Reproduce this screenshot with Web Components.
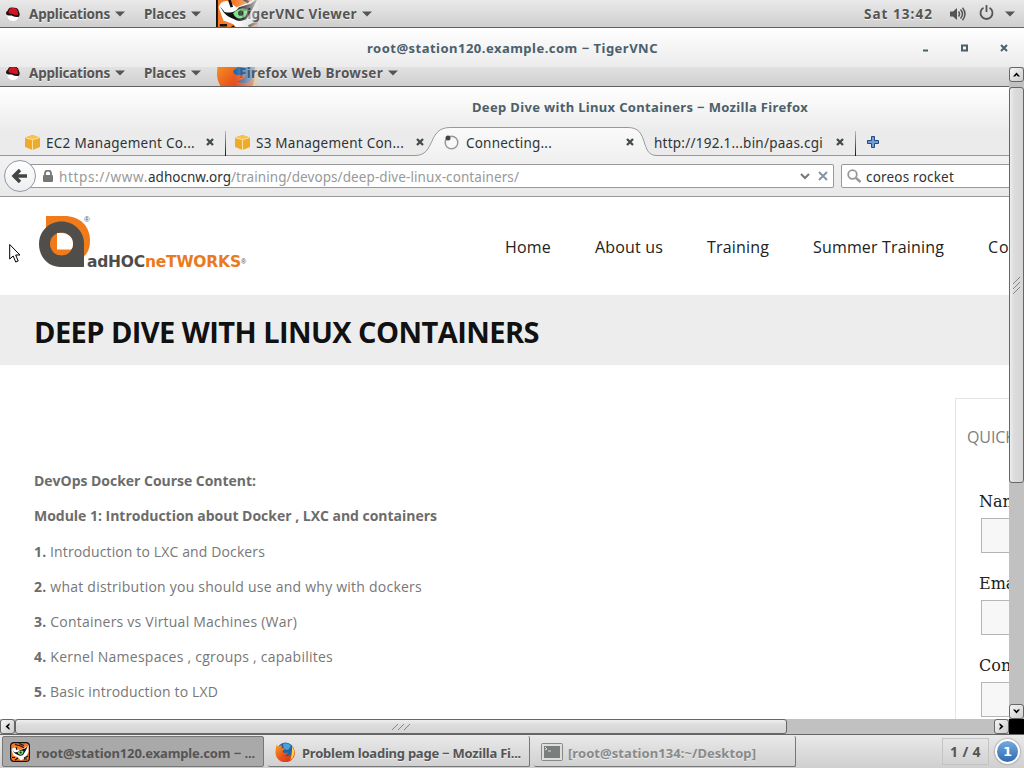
<!DOCTYPE html>
<html lang="en"><head><meta charset="utf-8"><title>Remote desktop</title>
<style>html,body{margin:0;width:1024px;height:768px;overflow:hidden;background:#fff;font-family:"Noto Sans","Open Sans",sans-serif}</style></head>
<body><remote-desktop></remote-desktop>
<script>
function define(name, css, html, after){
  customElements.define(name, class extends HTMLElement{
    connectedCallback(){
      if(this.shadowRoot) return;
      const t=document.createElement('template');
      t.innerHTML='<style>*{box-sizing:border-box}svg{display:block;flex:none}'+css+'</style>'+html;
      this.attachShadow({mode:'open'}).append(t.content.cloneNode(true));
      if(after) after(this,this.shadowRoot);
    }
  });
}
/* Text run spaced out to a given width */
define('fit-text',':host{display:block;flex:none;white-space:pre;line-height:20px}span{display:inline-block}','<span><slot></slot></span>',(h,r)=>{
  const w=+h.getAttribute('w'), s=r.querySelector('span');
  h.style.width=w+'px';
  const n=[...h.textContent].length;
  const have=s.getBoundingClientRect().width;
  s.style.letterSpacing=((w-have)/n)+'px';
  s.style.marginRight='-20px';
});
define('down-arrow',':host{display:block;flex:none}','<svg width="10" height="6"><path d="M0 .5h10L5 5.5z" fill="#555"/></svg>');
define('hat-icon',':host{display:block;flex:none}','<svg width="14" height="14" viewBox="0 0 14 14"><ellipse cx="7" cy="9.500" rx="5.500" ry="4.500" fill="#fff"/><path d="M0 6.500q0-2.500 1.500-2.500Q3 0 6 .6l4.500.4q2 1 2.500 4 1.500 3-.5 5-3 .5-7-1.500Q.5 9 0 6.500z" fill="#1c1010"/><path d="M2.500 6Q2.500 1 5.500 1.300q2-.8 5 .4Q12 3.500 12.300 7.500q-3 1.500-6-.5Q4 7 2.500 6z" fill="#d01523"/></svg>');
define('tiger-icon',':host{display:block;flex:none}svg{width:100%;height:100%}','<svg viewBox="0 0 20 20"><rect x=".6" y=".6" width="18.800" height="18.800" rx="3.500" fill="#f47a2a" stroke="#111" stroke-width="1.200"/><path d="M1.500 8q1-3 4-2.500L9 8l5-2 4.500-2.500V10l-3 5.500-4.500 3-3.500-3.500-4-1.500z" fill="#fff"/><path d="M5 2.500l6 1.500 3 2M9 1.500l5 2M2 15.500h3M5 18l3-2M18 14l-4 2M17 17l-3 0M6 5l1 3" stroke="#111" stroke-width="1.100" fill="none"/><path d="M2 7.500L4 10q4 1 6-2l5-1.500L18 4l-2.500 5L13 13q-3 1.500-5 0-3-1-4.500-3z" fill="#111"/><path d="M7.500 10.500q3-3 6-1.500 0 3.500-3 3.700-2 0-3-2.200z" fill="#7ce087"/><circle cx="10.700" cy="10.500" r="1.100" fill="#183018"/></svg>');
define('fox-icon',':host{display:block;flex:none}svg{width:100%;height:100%}','<svg viewBox="0 0 20 20"><defs><linearGradient id="a" x1="0" y1="0" x2="1" y2="1"><stop offset="0" stop-color="#f7a823"/><stop offset=".5" stop-color="#e8541c"/><stop offset="1" stop-color="#cf2f10"/></linearGradient></defs><circle cx="10.500" cy="9" r="8.600" fill="#2364a5"/><path d="M8 2q5-2 8 2l-3 4-4-1z" fill="#4aa2dc"/><path d="M2 2q0 2 1 2.500Q5 3 7 3.500L6.500 6q3 0 3.500 1L7.500 9q0 2 2.500 2l3-.5q-1 3-4 3 4 2 7-1 2-3 1-8 3 3 3 7a9.700 9.700 0 0 1-19.500-2Q.5 5 2 2z" fill="url(#a)"/><path d="M17 4q3 4 2.300 8-1 4-4 6 2-5 1.700-14z" fill="#ffd33d"/></svg>');
/* Desktop top panel */
define('top-panel',':host{display:flex;align-items:center;height:28px;flex:none;background:linear-gradient(#e9e9e9,#cfcfcf);border-bottom:1px solid #606060;color:#555;font-weight:700;font-size:13.500px;text-shadow:0 1px #f2f2f2}hat-icon{margin-left:6px}.pic{width:42px;height:27px;margin-left:15px;overflow:hidden;-webkit-mask:linear-gradient(90deg,#000 45%,rgba(0,0,0,.15))}.pic *{width:48px;height:48px;margin:-12px 0 0 -1px}.pic fox-icon{margin:-9px 0 0 0;width:46px;height:46px}fit-text.n{margin-left:-19px;text-shadow:0 0 1px #eee,0 1px #eee}down-arrow{margin-left:5px}',
 '<hat-icon></hat-icon><fit-text w="81" style="margin-left:9px">Applications</fit-text><down-arrow></down-arrow><fit-text w="42" style="margin-left:19px">Places</fit-text><down-arrow></down-arrow><div class="pic"></div><fit-text class="n"></fit-text><down-arrow></down-arrow><slot></slot>',(h,r)=>{
 r.querySelector('.pic').append(document.createElement(h.getAttribute('icon')));
 const o=r.querySelector('.n'),n=document.createElement('fit-text');n.className='n';n.setAttribute('w',h.getAttribute('w'));n.textContent=h.getAttribute('app');o.replaceWith(n);
});
define('status-area',':host{display:flex;align-items:center;flex:none;margin-left:auto}','<fit-text w="69">Sat 13:42</fit-text><svg width="17" height="14" style="margin-left:17px" fill="none" stroke="#555"><path d="M0 4.500h3l4-3.500v12L3 9.500H0z" fill="#555" stroke="none"/><path d="M8.500 4.500q2 2.500 0 5M10.500 2.500q4 4.500 0 9M12.500.8q5 6.200 0 12.400" stroke-width="1.500"/></svg><svg width="15" height="15" style="margin:-2px 0 0 12px" fill="none" stroke="#555" stroke-width="1.800"><path d="M4.500 2.800a6 6 0 1 0 6 0M7.500 0v7"/></svg><down-arrow style="margin:0 9px 0 11px"></down-arrow>');
define('vnc-title',':host{display:flex;align-items:center;height:39px;flex:none;background:linear-gradient(#fff,#ebebeb);color:#4a606b;font-weight:700;font-size:13px;padding-left:367px}svg{margin-left:265px}',
 '<fit-text w="291">root@station120.example.com − TigerVNC</fit-text><svg width="90" height="12" fill="none" stroke="#4a606b"><path d="M0 8.500h5" stroke-width="2"/><rect x="39" y="3.500" width="5" height="5" stroke-width="2"/><path d="M78 3l6 6M84 3l-6 6" stroke-width="2"/></svg>');
define('browser-title',':host{display:block;height:40px;flex:none;padding:10px 0 0 472px;color:#4a606b;font-weight:700;font-size:13px}','<fit-text w="336">Deep Dive with Linux Containers − Mozilla Firefox</fit-text>');
define('tab-icon',':host{display:block;flex:none}','<svg width="15" height="15" viewBox="0 0 15 15"><path d="M0 2.500L7.500 0 15 2.500V12l-7.500 3L0 12z" fill="#f0aa2a"/><path d="M0 2.500L7.500 4.500 15 2.500 7.500 0z" fill="#f7c34c"/><path d="M.5 2.700l7 2 7-2M7.500 4.500V15" fill="none" stroke="#fce3a4"/></svg>');
define('browser-tab',':host{display:flex;align-items:center;width:210px;height:30px;flex:none;position:relative;color:#2e3436;font-size:13.500px;padding-top:2px}::slotted(*){position:relative}.x{margin-left:auto;margin-right:11px;margin-top:-2px;position:relative}.bg{position:absolute;left:-20px;top:0;display:none}:host([on]) .bg{display:block}:host([sep]):after{content:"";position:absolute;right:-1px;top:4px;width:1px;height:25px;background:linear-gradient(#bbb,#111)}',
 '<svg class="bg" width="242" height="31"><defs><linearGradient id="g" x2="0" y2="1"><stop offset="0" stop-color="#fafafa"/><stop offset="1" stop-color="#f1f1f1"/></linearGradient></defs><path d="M0 31V28.500C21 28.500 12 .5 35 .5H213C235 .5 224 28.500 242 28.500V31z" fill="url(#g)"/><path d="M0 28.500C21 28.500 12 .5 35 .5H213C235 .5 224 28.500 242 28.500" fill="none" stroke="#999"/></svg><slot></slot><svg class="x" width="8" height="8"><path d="M1 1l6 6M7 1L1 7" stroke="#424a4d" stroke-width="2.300"/></svg>');
define('tab-strip',':host{display:flex;height:30px;flex:none;padding-left:15px;background:linear-gradient(transparent 28px,#999 28px,#999 29px,#f1f1f1 29px);}tab-icon,.sp{margin-left:9.500px;margin-top:-2px}fit-text{margin-left:6.500px}.plus{margin:9px 0 0 12px}',
 `<browser-tab sep><tab-icon></tab-icon><fit-text w="149">EC2 Management Co...</fit-text></browser-tab><browser-tab><tab-icon></tab-icon><fit-text w="148">S3 Management Con...</fit-text></browser-tab><browser-tab on><svg class="sp" style="margin-left:9px" width="15" height="15"><circle cx="7.500" cy="7.500" r="6.300" fill="#f8f8f8" stroke="#999" stroke-width="1.500"/><circle cx="4" cy="3" r="2.500" fill="#444"/></svg><fit-text w="86" style="margin-left:7px">Connecting...</fit-text></browser-tab><browser-tab sep><fit-text w="169" style="margin-left:9px">http://192.1...bin/paas.cgi</fit-text></browser-tab><svg class="plus" width="12" height="12"><path d="M4.500.5h3v4h4v3h-4v4h-3v-4h-4v-3h4z" fill="#729fcf" stroke="#204a87"/></svg>`);
define('nav-bar',':host{display:flex;height:40px;flex:none;padding-top:7px;background:linear-gradient(#f1f1f1,#e9e9e9);border-bottom:1px solid #999;font-size:13.500px;color:#999;position:relative}.url,.s{display:flex;align-items:center;height:24px;background:#fff;border:1px solid #999;border-radius:2px;flex:none}fit-text{margin-top:2px}.url{width:813px;margin-left:-16px;padding-left:22px;border-left:0}.s{width:180px;margin-left:7px;padding-left:5px;color:#2e3436}.back{margin:-5px 0 0 3px;position:relative;z-index:1}b{font-weight:400;color:#2e3436}',
 `<svg class="back" width="34" height="34"><defs><linearGradient id="b" x2="0" y2="1"><stop stop-color="#fff"/><stop offset="1" stop-color="#eee"/></linearGradient></defs><circle cx="17" cy="17" r="15.500" fill="url(#b)" stroke="#8d98a5"/><path d="M24 17H12M17 11l-6 6 6 6" fill="none" stroke="#424545" stroke-width="3.500"/></svg><div class="url"><svg width="10" height="12"><path d="M2 6V3.500a3 3 0 0 1 6 0V6" fill="none" stroke="#777" stroke-width="1.800"/><rect y="5" width="10" height="7" rx="1" fill="#777"/></svg><fit-text w="89" style="margin-left:6px">https://www.</fit-text><fit-text w="83"><b>adhocnw.org</b></fit-text><fit-text w="288">/training/devops/deep-dive-linux-containers/</fit-text><svg width="30" height="12" style="margin-left:281px" fill="none" stroke-width="2"><path d="M1 4l4 4 4-4" stroke="#777"/><path d="M19 2l8 8M27 2l-8 8" stroke="#8595a6"/></svg></div><div class="s"><svg width="14" height="14" fill="none" stroke="#999"><circle cx="5.500" cy="5.500" r="4.300" stroke-width="1.800"/><path d="M9 9l4.500 4" stroke-width="2.500"/></svg><fit-text w="88" style="margin-left:5px">coreos rocket</fit-text></div>`);
define('site-header',':host{display:flex;height:98px;flex:none;background:#fff;font:16px "Open Sans",sans-serif;color:#222}.logo{display:flex;flex:none;width:209px;margin:19px 0 0 39px;align-items:flex-start}.w{margin:35px 0 0 -3px;display:flex;font:700 15.500px "DejaVu Sans",sans-serif;color:#4f4d4b}.w fit-text{line-height:22px}.o{color:#ea7a1d}.tm{font:7px/22px "Liberation Sans"}nav{display:flex;margin:40px 0 0 257px}nav *{margin-right:44px}',
 `<div class="logo"><svg width="52" height="51"><path d="M7 0h18c16 0 26 10 26 25 0 12-7 18-12 18H7z" fill="#ef7b1a"/><path d="M45 51H22C9 51 0 41 0 28S10 5.500 22.500 5.500 45 15 45 28z" fill="#4f4e4a"/><circle cx="22.500" cy="28" r="11.500" fill="#ef7b1a"/><path d="M18 17h4.500C29 17 34 21 34 28c0 3-1 5-2 5.500H18z" fill="#fff"/></svg><span style="font:8px/8px 'Liberation Sans';margin-left:-7px;color:#555">®</span><div class="w" style="margin-left:-3px"><fit-text w="58">adHOC</fit-text><fit-text class="o" w="96">neTWORKS</fit-text><span class="tm">®</span></div></div><nav><fit-text w="46">Home</fit-text><fit-text w="68">About us</fit-text><fit-text w="62">Training</fit-text><fit-text w="131">Summer Training</fit-text><fit-text w="64">Contact</fit-text></nav>`);
define('course-body',':host{display:block;width:600px;padding:106.300px 0 0 34px;font:14px "Open Sans",sans-serif;color:#777}fit-text{margin-bottom:15.150px}b{color:#6c6c6c}',
 '<fit-text w="222"><b>DevOps Docker Course Content:</b></fit-text><fit-text w="403"><b>Module 1: Introduction about Docker , LXC and containers</b></fit-text><fit-text w="231"><b>1.</b> Introduction to LXC and Dockers</fit-text><fit-text w="388"><b>2.</b> what distribution you should use and why with dockers</fit-text><fit-text w="263"><b>3.</b> Containers vs Virtual Machines (War)</fit-text><fit-text w="299"><b>4.</b> Kernel Namespaces , cgroups , capabilites</fit-text><fit-text w="184"><b>5.</b> Basic introduction to LXD</fit-text>');
define('quick-form',':host{display:block;width:220px;height:400px;flex:none;margin-top:33px;border:1px solid #e5e5e5;padding:28px 0 0 11px;font:16px "Open Sans",sans-serif;color:#808080}label{display:block;margin-left:12px;font:300 16px/22px "DejaVu Serif",serif;color:#222;height:82px}i{display:block;width:180px;height:35px;margin:5px 0 0 2px;background:#f7f7f7;border:1px solid #b5b5b5}.f{margin-top:44px}',
 '<fit-text w="124">QUICK CONTACT</fit-text><div class="f"><label>Name<i></i></label><label>Email<i></i></label><label>Contact<i></i></label></div>');
define('web-page',':host{display:flex;flex-direction:column;flex:1;background:#fff;overflow:hidden}h1{margin:0;height:70px;flex:none;background:#ededed;padding:27px 0 0 34px;font:700 29px "Open Sans",sans-serif;color:#111}.row{display:flex;justify-content:space-between;width:1175px}',
 '<site-header></site-header><h1><fit-text w="505">DEEP DIVE WITH LINUX CONTAINERS</fit-text></h1><div class="row"><course-body></course-body><quick-form></quick-form></div>');
define('scroll-button',':host{display:flex;flex:none;width:15px;height:15px;align-items:center;justify-content:center;border:1px solid #666;border-radius:3px;background:linear-gradient(135deg,#f5f5f5,#ccc)}:host([d="down"]) svg{transform:rotate(180deg)}:host([d="left"]) svg{transform:rotate(-90deg)}:host([d="right"]) svg{transform:rotate(90deg)}','<svg width="7" height="7"><path d="M0 5.500L3.500 1.500 7 5.500 5 5.500 3.500 4 2 5.500z" fill="#000"/></svg>');
define('v-scroll',':host{display:flex;flex-direction:column;width:15px;height:652px;flex:none;background:#c1c1c1;justify-content:space-between}.t{height:396px;border:1px solid #666;border-radius:3px;background:linear-gradient(90deg,#eee,#dcdcdc 30%,#d5d5d5);display:flex;align-items:center;justify-content:center}.a{display:flex;flex-direction:column;gap:5px}',
 '<div class="a"><scroll-button d="up"></scroll-button><div class="t"><svg width="8" height="22" stroke="#888"><path d="M0 10l7-7M0 15l7-7M0 20l7-7"/></svg></div></div><scroll-button d="down"></scroll-button>');
define('h-scroll',':host{display:flex;width:1024px;height:15px;flex:none;background:#c1c1c1}.t{width:772px;border:1px solid #666;border-radius:3px;background:linear-gradient(#eee,#dcdcdc 40%,#d5d5d5);display:flex;align-items:center;justify-content:center}.e{margin-left:auto;display:flex}.k{width:15px;background:#000}',
 '<scroll-button d="left"></scroll-button><div class="t"><svg width="20" height="8" stroke="#888"><path d="M1 7l6-6M7 7l6-6M13 7l6-6"/></svg></div><div class="e"><scroll-button d="right"></scroll-button><div class="k"></div></div>');
define('task-button',':host{display:flex;align-items:center;height:31px;width:262px;flex:none;padding-left:7px;border-right:1px solid #777;border-bottom:1px solid #777;border-radius:2px;color:#555;font-weight:700;font-size:13px;text-shadow:0 1px #eee}:host([on]){background:#a9a9a9;border:1px solid #777;text-shadow:none}:host([off]){color:#898989}','<slot></slot>');
define('bottom-panel',':host{display:flex;height:34px;flex:none;border-top:1px solid #666;background:linear-gradient(#e9e9e9,#cfcfcf);padding:1px 0 0 2px;gap:4px;color:#555}tiger-icon,fox-icon{width:20px;height:20px}.pg{margin:2px 0 0 142px;width:47px;height:27px;border:1px solid #c4c4c4;padding:3px 0 0 7px;font-weight:700;font-size:14px}.n{margin:3px 0 0 2px;width:25px;height:25px;border:2px solid #fff;border-radius:50%;box-shadow:0 0 2px #555;background:linear-gradient(#75a9df,#3269ad);color:#fff;font:700 13px/21px "DejaVu Sans",sans-serif;text-align:center}fit-text{margin:3px 0 0 6px}',
 `<task-button on><tiger-icon></tiger-icon><fit-text w="219">root@station120.example.com − ...</fit-text></task-button><task-button><fox-icon style="margin-top:2px"></fox-icon><fit-text w="219" style="margin-left:7px">Problem loading page − Mozilla Fi...</fit-text></task-button><task-button off><svg width="22" height="19" style="margin-top:2px"><rect x=".5" y=".5" width="21" height="17" rx="1" fill="#ddd" stroke="#888"/><rect x="3" y="3" width="16" height="12" fill="#7a7f7c"/><path d="M4 4l2 2-2 1M7 8h3" stroke="#ddd" fill="none"/></svg><fit-text w="188" style="margin-left:5px">[root@station134:~/Desktop]</fit-text></task-button><div class="pg"><fit-text style="margin:0" w="31">1 / 4</fit-text></div><div class="n">1</div>`);
define('remote-view',':host{display:flex;height:652px;flex:none}.w{width:1009px;height:652px;overflow:hidden;display:flex;flex-direction:column;background:#ebebeb}.top{margin-top:-8px;flex:none}.c{background:linear-gradient(#fff,#ebebeb 45px);display:flex;flex-direction:column;flex:1;overflow:hidden}',
 '<div class="w"><top-panel class="top" app="Firefox Web Browser" w="144" icon="fox-icon"></top-panel><div class="c"><browser-title></browser-title><tab-strip></tab-strip><nav-bar></nav-bar><web-page></web-page></div></div><v-scroll></v-scroll>');
define('remote-desktop',':host{display:flex;flex-direction:column;width:1024px;height:768px;overflow:hidden;position:relative}.cur{position:absolute;left:9px;top:243px}',
 `<top-panel app="TigerVNC Viewer" w="118" icon="tiger-icon"><status-area></status-area></top-panel><vnc-title></vnc-title><remote-view></remote-view><h-scroll></h-scroll><bottom-panel></bottom-panel><svg class="cur" width="13" height="21"><path d="M.7 1.500V16l3.500-3 2.500 6 2.500-1-2.500-6H11z" fill="#fff" stroke="#000"/></svg>`);
</script></body></html>
